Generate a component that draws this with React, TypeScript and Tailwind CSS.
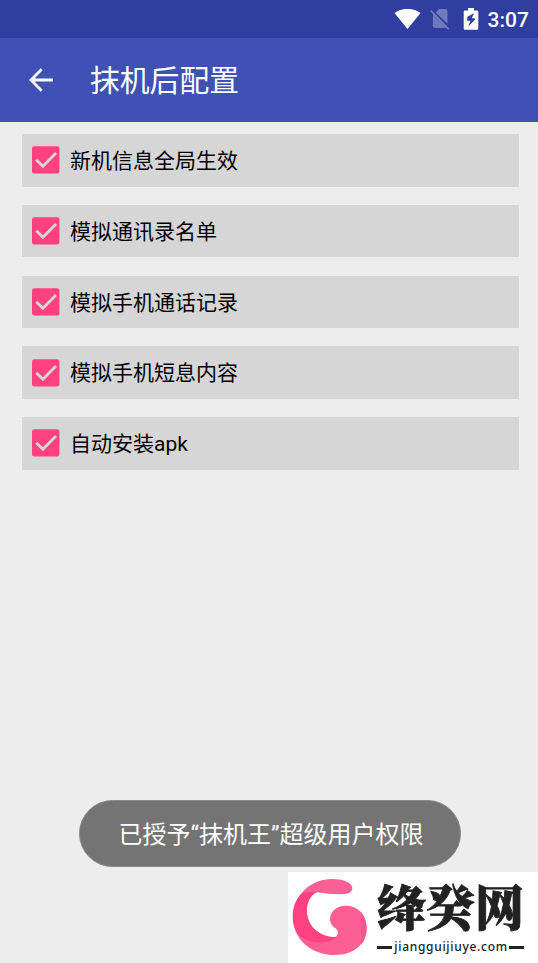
const options = [
  "新机信息全局生效",
  "模拟通讯录名单",
  "模拟手机通话记录",
  "模拟手机短息内容",
  "自动安装apk",
]

function StatusBar() {
  return (
    <div className="flex h-[38px] shrink-0 items-center justify-end bg-[#303f9f] pr-[9.5px] text-white">
      <svg className="h-[21px] w-[27px]" viewBox="0 0 27 21" fill="currentColor">
        <path d="M0.5 4 C8 -1.5 19 -1.5 26.5 4 L13.5 20 Z" />
      </svg>
      <svg className="ml-[9px] h-[22px] w-[21px]" viewBox="0 0 21 22" fill="none">
        <path
          d="M9 1 H15.5 Q17.5 1 17.5 3 V15.8 L5.6 4.4 Z M3 6.2 L16.4 20 H4.8 Q2.8 20 2.8 18 Z"
          fill="#6f79bc"
        />
        <path d="M0.8 2.7 L18.6 21" stroke="#7c85c3" strokeWidth="1.6" />
      </svg>
      <svg className="ml-[12px] h-[22px] w-[16px]" viewBox="0 0 16 22">
        <path d="M5 0 H11 V2.4 H14 Q15.3 2.4 15.3 3.7 V20.5 Q15.3 21.8 14 21.8 H2 Q0.7 21.8 0.7 20.5 V3.7 Q0.7 2.4 2 2.4 H5 Z" fill="#fff" />
        <path d="M11 5.2 L4.4 8.8 L4 12.7 H7.4 L5.2 18.6 L12 11.8 L11.8 10.2 H8.8 Z" fill="#303f9f" />
      </svg>
      <span className="relative top-[1px] ml-[9px] w-[41px] whitespace-nowrap text-[21px] leading-none font-medium">3:07</span>
    </div>
  )
}

function Checkbox() {
  return (
    <svg className="h-7 w-7 shrink-0" viewBox="0 0 28 28" fill="none">
      <rect x="0" y="0.2" width="27.4" height="27.4" rx="2.4" fill="#ff4081" />
      <path d="M4.3 13.7 L10.9 20.2 L24 7" stroke="#d6d6d6" strokeWidth="2.8" />
    </svg>
  )
}

function SiteLogo() {
  return (
    <div className="absolute right-0 bottom-0 flex h-[91px] w-[250px] bg-white">
      <svg className="h-[91px] w-[82px] shrink-0" viewBox="6 6 246 273">
        <path
          d="M92 67 C53 86 54 151 88 180 C108 197 130 202 146 201 C155 200 158 187 153 179 C147 173 132 166 132 148 C132 123 153 107 178 107 C218 107 242 137 242 174 C242 222 202 255 148 255 C75 255 21 207 21 143 C21 74 75 27 139 27 C170 27 199 37 199 55 C198 80 150 74 92 67 Z"
          fill="#fb5f93"
        />
        <path
          d="M92 67 C53 86 54 151 88 180 C108 197 130 202 153 201 C129 223 63 226 33 188 C14 155 16 107 40 78 C53 64 72 64 92 67 Z"
          fill="#ff4081"
        />
        <path d="M225 125 C247 152 247 198 225 225 Z" fill="#fa568d" />
      </svg>
      <div className="w-[160px] pl-[7px] text-[#222]">
        <div className="mt-[9px] whitespace-nowrap font-['Noto_Serif_CJK_SC','Noto_Sans_CJK_SC',serif] text-[49px] leading-[48px] font-black [-webkit-text-stroke:0.8px_#222]">
          绛癸网
        </div>
        <div className="mt-[10px] flex items-center">
          <span className="h-[3px] w-[15px] shrink-0 bg-[#222]" />
          <span className="w-[117px] shrink-0 pl-px text-center font-['Noto_Sans',sans-serif] text-[12px] leading-[16px] font-medium tracking-[0.7px]">
            jiangguijiuye.com
          </span>
          <span className="h-[3px] w-[15px] shrink-0 bg-[#222]" />
        </div>
      </div>
    </div>
  )
}

export default function App() {
  return (
    <div className="relative flex h-[963px] w-[538px] flex-col overflow-hidden bg-[#ededed] font-['Roboto','Noto_Sans_CJK_SC',sans-serif]">
      <StatusBar />

      {/* Toolbar */}
      <header className="flex h-[84px] shrink-0 items-center bg-[#3f51b5] pl-[29px] text-white">
        <svg className="h-6 w-6" viewBox="0 0 24 24" fill="none" stroke="currentColor" strokeWidth="2.8">
          <path d="M24 12 H2.5 M12.7 1.2 L2 12 L12.7 22.8" />
        </svg>
        <h1 className="ml-[37px] pt-[2px] text-[29.8px] leading-none">抹机后配置</h1>
      </header>

      {/* Options */}
      <main className="flex flex-col gap-[18.25px] pt-3 pr-[19.5px] pl-[22px]">
        {options.map((label) => (
          <label key={label} className="flex h-[52.5px] items-center gap-[10px] bg-[#d6d6d6] pl-[10px] text-[21px] text-black">
            <Checkbox />
            <span className="pt-[3px]">{label}</span>
          </label>
        ))}
      </main>

      {/* Toast */}
      <div className="absolute top-[800px] left-[79px] flex h-[67px] w-[382px] items-center justify-center rounded-full border border-[#888] bg-[#747474] pt-[3px] pl-[2px] text-[24px] whitespace-nowrap text-white">
        已授予“抹机王”超级用户权限
      </div>

      <SiteLogo />
    </div>
  )
}
